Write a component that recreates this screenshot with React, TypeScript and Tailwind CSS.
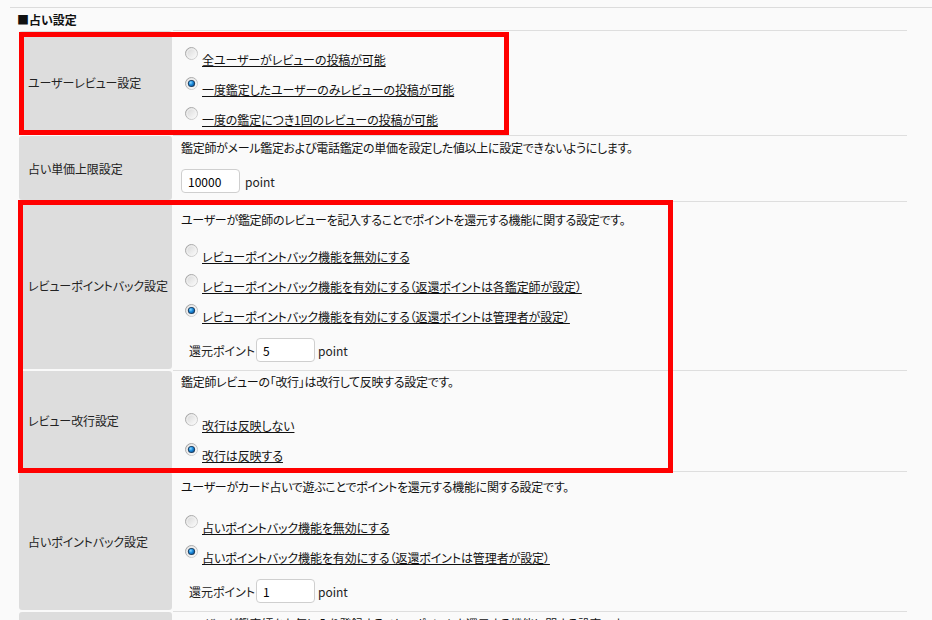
import React from "react";

const FONT = { fontFamily: '"Noto Sans CJK JP", "Noto Sans", sans-serif' };

function Radio({ checked }: { checked?: boolean }) {
  return (
    <svg width="13" height="13" viewBox="0 0 13 13" className="shrink-0 block">
      <defs>
        <linearGradient id="rbStroke" x1="0" y1="0" x2="1" y2="1">
          <stop offset="0" stopColor="#9a9a9a" />
          <stop offset="1" stopColor="#dadada" />
        </linearGradient>
        <linearGradient id="rbFill" x1="0" y1="0" x2="1" y2="1">
          <stop offset="0" stopColor="#d4d4d4" />
          <stop offset="1" stopColor="#ffffff" />
        </linearGradient>
        <radialGradient id="rbDot" cx="0.35" cy="0.35" r="0.75">
          <stop offset="0" stopColor="#8fd8ff" />
          <stop offset="0.5" stopColor="#1f8fe0" />
          <stop offset="1" stopColor="#0b4f92" />
        </radialGradient>
      </defs>
      <circle cx="6.5" cy="6.5" r="6" fill="url(#rbFill)" stroke="url(#rbStroke)" strokeWidth="1" />
      <circle cx="6.5" cy="6.5" r="4.6" fill="none" stroke="#f4f4f4" strokeWidth="0.8" />
      {checked && (
        <>
          <circle cx="6.5" cy="6.5" r="3.6" fill="#1d3c5c" />
          <circle cx="6.5" cy="6.5" r="2.7" fill="url(#rbDot)" />
        </>
      )}
    </svg>
  );
}

function Option({ text, checked }: { text: string; checked?: boolean }) {
  return (
    <div className="flex items-start h-[20px] pl-[4px]">
      <Radio checked={checked} />
      <span className="ml-[4px] mt-[6px] leading-[13px] underline underline-offset-[1px] text-[#111] tracking-[-0.1px] whitespace-nowrap">
        {text}
      </span>
    </div>
  );
}

function Options({ items, className }: { items: { t: string; c?: boolean }[]; className: string }) {
  return (
    <div className={"flex flex-col gap-[10px] " + className}>
      {items.map((o) => (
        <Option key={o.t} text={o.t} checked={o.c} />
      ))}
    </div>
  );
}

function PointInput({ value }: { value: string }) {
  return (
    <div className="w-[59px] h-[24px] border border-[#cfcfcf] rounded-[4px] bg-white flex items-center pl-[6px] text-[12px] text-black leading-[13px]">
      {value}
    </div>
  );
}

function Row({ label, children, valueClass }: { label: string; children: React.ReactNode; valueClass: string }) {
  return (
    <div className="flex items-stretch">
      <div className="w-[153px] ml-[1px] mr-[1px] my-[1px] bg-[#dddddd] rounded-[3px] flex items-center pl-[9px] text-[#222] leading-[13px] tracking-[-0.1px] whitespace-nowrap">
        {label}
      </div>
      <div className={"flex-1 border-t border-[#dedede] pl-[8px] " + valueClass}>{children}</div>
    </div>
  );
}

function Desc({ children }: { children: React.ReactNode }) {
  return <div className="leading-[13px] tracking-[-0.3px] whitespace-nowrap text-[#111]">{children}</div>;
}

export default function App() {
  return (
    <div
      className="relative w-[932px] h-[620px] overflow-hidden bg-[#fafafa] text-[12px] text-[#222] pt-[7px] [font-feature-settings:'palt']"
      style={FONT}
    >
      <div className="ml-[10px] border-t border-[#dcdcdc]" />
      <div className="pl-[17px] pt-[5px] leading-[14px] font-bold text-[12px] text-[#111]">■占い設定</div>

      <div className="ml-[18px] w-[889px] mt-[3px]">
        <Row label="ユーザーレビュー設定" valueClass="pt-[16px] pb-[8px]">
          <Options
            className=""
            items={[
              { t: "全ユーザーがレビューの投稿が可能" },
              { t: "一度鑑定したユーザーのみレビューの投稿が可能", c: true },
              { t: "一度の鑑定につき1回のレビューの投稿が可能" },
            ]}
          />
        </Row>

        <Row label="占い単価上限設定" valueClass="pt-[5px] pb-[8px]">
          <Desc>鑑定師がメール鑑定および電話鑑定の単価を設定した値以上に設定できないようにします。</Desc>
          <div className="flex items-center mt-[15px]">
            <PointInput value="10000" />
            <span className="ml-[5px] leading-[13px]">point</span>
          </div>
        </Row>

        <Row label="レビューポイントバック設定" valueClass="pt-[11px] pb-[8px]">
          <Desc>ユーザーが鑑定師のレビューを記入することでポイントを還元する機能に関する設定です。</Desc>
          <Options
            className="mt-[18px]"
            items={[
              { t: "レビューポイントバック機能を無効にする" },
              { t: "レビューポイントバック機能を有効にする（返還ポイントは各鑑定師が設定）" },
              { t: "レビューポイントバック機能を有効にする（返還ポイントは管理者が設定）", c: true },
            ]}
          />
          <div className="flex items-center mt-[14px] pl-[8px]">
            <span className="inline-block w-[63px] mr-[4px] leading-[13px] whitespace-nowrap">還元ポイント</span>
            <PointInput value="5" />
            <span className="ml-[3px] leading-[13px]">point</span>
          </div>
        </Row>

        <Row label="レビュー改行設定" valueClass="pt-[4px] pb-[8px]">
          <Desc>鑑定師レビューの「改行」は改行して反映する設定です。</Desc>
          <Options
            className="mt-[25px]"
            items={[{ t: "改行は反映しない" }, { t: "改行は反映する", c: true }]}
          />
        </Row>

        <Row label="占いポイントバック設定" valueClass="pt-[8px] pb-[8px]">
          <Desc>ユーザーがカード占いで遊ぶことでポイントを還元する機能に関する設定です。</Desc>
          <Options
            className="mt-[22px]"
            items={[
              { t: "占いポイントバック機能を無効にする" },
              { t: "占いポイントバック機能を有効にする（返還ポイントは管理者が設定）", c: true },
            ]}
          />
          <div className="flex items-center mt-[14px] pl-[8px]">
            <span className="inline-block w-[63px] mr-[4px] leading-[13px] whitespace-nowrap">還元ポイント</span>
            <PointInput value="1" />
            <span className="ml-[3px] leading-[13px]">point</span>
          </div>
        </Row>

        <Row label="" valueClass="pt-[5px] pb-[8px] h-[60px]">
          <Desc>ユーザーが鑑定師をお気に入り登録することでポイントを還元する機能に関する設定です。</Desc>
        </Row>
      </div>

      <div className="absolute left-[19px] top-[32px] w-[490px] h-[103px] border-[5px] border-[#ff0000] pointer-events-none" />
      <div className="absolute left-[18px] top-[200px] w-[655px] h-[273px] border-[5px] border-[#ff0000] pointer-events-none" />
    </div>
  );
}
